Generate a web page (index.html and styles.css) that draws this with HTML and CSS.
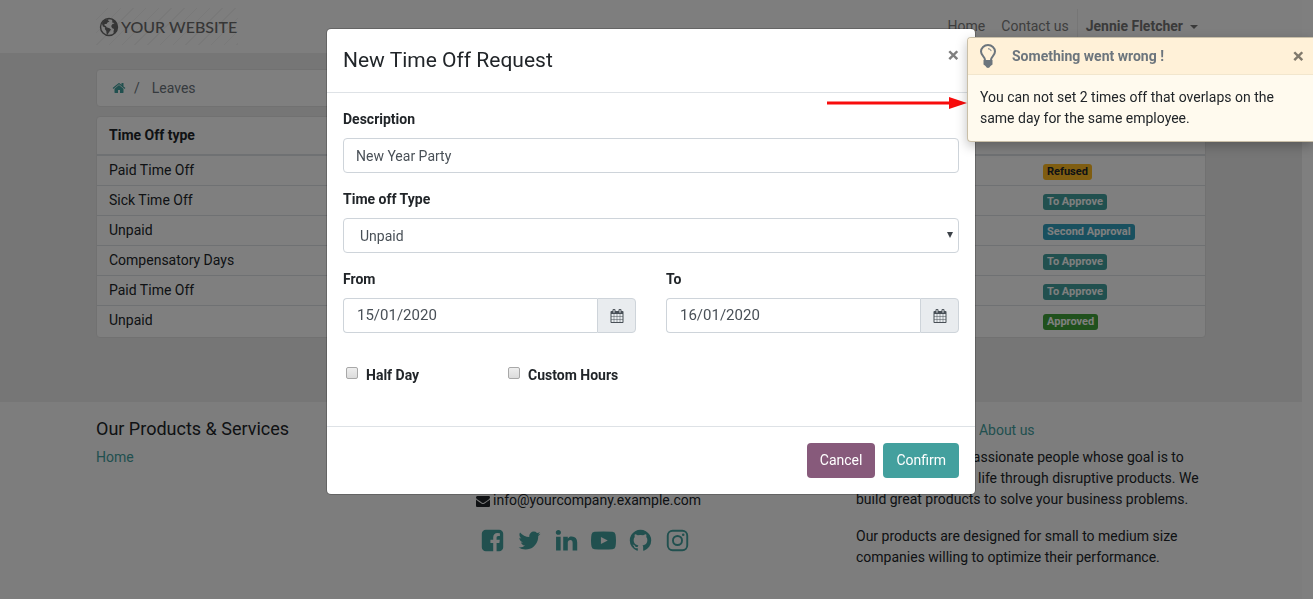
FILE: index.html
```html
<!DOCTYPE html>
<html lang="en">
<head>
<meta charset="utf-8">
<title>Leaves | Your Website</title>
<link rel="stylesheet" href="styles.css">
</head>
<body>
<div class="page">
  <header class="site-header">
    <div class="container header-row">
      <a class="logo" href="#">
        <svg class="globe" viewBox="0 0 20 20" aria-hidden="true">
          <circle cx="10" cy="10" r="8.500" fill="none" stroke="currentColor" stroke-width="1.400"/>
          <path fill="currentColor" d="M3.500 5 6 2.800 9.500 2 9 3.500 10.500 4.500 8.500 5.500 7.500 7 5.500 7 5.500 8.500 7 9 7.500 10.300 10.500 11.200 12 12.500 10.500 14.500 9.500 16 8.500 17.800 7.500 16.500 7.300 14 5.800 12 6.200 10.500 4 9.500 3 7Z"/>
          <path fill="currentColor" d="M12.500 2 15.500 3.500 18 7 18.500 11 17 15 14.800 17 14.500 14.500 15 12 13 11 12.200 9 13.500 7 15.500 6.500 14 5.500 12.800 5.500 13.500 4Z"/>
        </svg>
        <span>YOUR WEBSITE</span>
      </a>
      <nav class="nav">
        <a href="#">Home</a>
        <a href="#">Contact us</a>
        <button class="user" type="button">Jennie Fletcher <span class="caret"></span></button>
      </nav>
    </div>
  </header>

  <main class="main">
    <div class="container">
      <nav class="card breadcrumb" aria-label="Breadcrumb">
        <a href="#" aria-label="Home"><svg class="home-icon" viewBox="0 0 1792 1792" aria-hidden="true"><path fill="currentColor" d="M1472 992v480q0 26-19 45t-45 19h-384v-384h-256v384h-384q-26 0-45-19t-19-45v-480q0-1 .5-3t.5-3l575-474 575 474q1 2 1 6zm223-69l-62 74q-8 9-21 11h-3q-13 0-21-7l-692-577-692 577q-12 8-24 7-13-2-21-11l-62-74q-8-10-7-23.500t11-21.500l719-599q32-26 76-26t76 26l244 204v-195q0-14 9-23t23-9h192q14 0 23 9t9 23v408l219 182q10 8 11 21.500t-7 23.500z"/></svg></a>
        <span class="slash">/</span>
        <span>Leaves</span>
      </nav>
      <div class="card">
        <table class="leaves">
          <thead><tr><th>Time Off type</th><th class="status"></th></tr></thead>
          <tbody>
            <tr><td>Paid Time Off</td><td class="status"><span class="badge refused">Refused</span></td></tr>
            <tr><td>Sick Time Off</td><td class="status"><span class="badge pending">To Approve</span></td></tr>
            <tr><td>Unpaid</td><td class="status"><span class="badge second">Second Approval</span></td></tr>
            <tr><td>Compensatory Days</td><td class="status"><span class="badge pending">To Approve</span></td></tr>
            <tr><td>Paid Time Off</td><td class="status"><span class="badge pending">To Approve</span></td></tr>
            <tr><td>Unpaid</td><td class="status"><span class="badge approved">Approved</span></td></tr>
          </tbody>
        </table>
      </div>
    </div>
  </main>

  <footer class="site-footer">
    <div class="container footer-grid">
      <section>
        <h2>Our Products &amp; Services</h2>
        <a href="#">Home</a>
      </section>
      <section class="contact">
        <p class="mail"><svg viewBox="0 0 1792 1792" aria-hidden="true"><path fill="currentColor" d="M1792 710v794q0 66-47 113t-113 47h-1472q-66 0-113-47t-47-113v-794q44 49 101 87 362 246 497 345 57 42 92.500 65.500t94.500 48 110 24.500h2q51 0 110-24.500t94.500-48 92.500-65.500q170-123 498-345 57-39 100-87zm0-294q0 79-49 151t-122 123q-376 261-468 325-10 7-42.500 31t-54 38.500-52 32.500-57.500 27-50 9h-2q-23 0-50-9t-57.500-27-52-32.500-54-38.500-42.500-31q-91-64-262-182.500t-205-142.500q-62-42-117-115.500t-55-136.500q0-78 41.500-130t118.500-52h1472q65 0 112.500 47t47.500 113z"/></svg><span>info@yourcompany.example.com</span></p>
        <div class="social">
          <a href="#" aria-label="Facebook"><svg viewBox="0 0 1792 1792"><path fill="currentColor" d="M1376 128q119 0 203.500 84.500t84.500 203.500v960q0 119-84.500 203.500t-203.500 84.500h-188v-595h199l30-232h-229v-148q0-56 23.500-84t91.500-28l122-1v-207q-63-9-178-9-136 0-217.500 80t-81.500 226v171h-200v232h200v595h-532q-119 0-203.500-84.500t-84.500-203.500v-960q0-119 84.500-203.500t203.500-84.500h960z"/></svg></a>
          <a href="#" aria-label="Twitter"><svg viewBox="0 0 1792 1792"><path fill="currentColor" d="M1684 408q-67 98-162 167 1 14 1 42 0 130-38 259.500t-115.500 248.500-184.500 210.500-258 146-323 54.500q-271 0-496-145 35 4 78 4 225 0 401-138-105-2-188-64.500t-114-159.500q33 5 61 5 43 0 85-11-112-23-185.500-111.500t-73.500-205.500v-4q68 38 146 41-66-44-105-115t-39-154q0-88 44-163 121 149 294.500 238.500t371.500 99.500q-8-38-8-74 0-134 94.500-228.500t228.500-94.500q140 0 236 102 109-21 205-78-37 115-142 178 93-10 186-50z"/></svg></a>
          <a href="#" aria-label="LinkedIn"><svg viewBox="0 0 1792 1792"><path fill="currentColor" d="M477 625v991h-330v-991h330zm21-306q1 73-50.500 122t-135.500 49h-2q-82 0-132-49t-50-122q0-74 51.500-122.500t134.500-48.500 133 48.500 51 122.500zm1166 729v568h-329v-530q0-105-40.500-164.500t-126.500-59.500q-63 0-105.500 34.500t-63.500 85.500q-11 30-11 81v553h-329q2-399 2-647t-1-296l-1-48h329v144h-2q20-32 41-56t56.500-52 87-43.500 114.500-15.500q171 0 275 113.500t104 332.500z"/></svg></a>
          <a href="#" aria-label="YouTube"><svg viewBox="0 0 1792 1792"><path fill="currentColor" fill-rule="evenodd" d="M896 256q420 0 640 18 190 16 220 190 36 200 36 432t-36 432q-30 174-220 190-220 18-640 18t-640-18q-190-16-220-190-36-200-36-432t36-432q30-174 220-190 220-18 640-18zM711 640v512l490-256z"/></svg></a>
          <a href="#" aria-label="GitHub"><svg viewBox="0 0 1792 1792"><path fill="currentColor" d="M896 128q209 0 385.500 103t279.500 279.500 103 385.500q0 251-146.500 451.500t-378.500 277.500q-27 5-40-7t-13-30q0-3 .5-76.500t.5-134.500q0-97-52-142 57-6 102.500-18t94-39 81-66.500 53-105 20.500-150.500q0-119-79-206 37-91-8-204-28-9-81 11t-92 44l-38 24q-93-26-192-26t-192 26q-16-11-42.500-27t-83.500-38.500-85-13.500q-45 113-8 204-79 87-79 206 0 85 20.500 150t52.500 105 80.500 67 94 39 102.500 18q-39 36-49 103-21 10-45 15t-57 5-65.500-21.500-55.500-62.500q-19-32-48.500-52t-49.500-24l-20-3q-21 0-29 4.500t-5 11.500 9 14 13 12l7 5q22 10 43.500 38t31.500 51l10 23q13 38 44 61.500t67 30 69.500 7 55.500-3.500l23-4q0 38 .5 88.500t.5 54.500q0 18-13 30t-40 7q-232-77-378.500-277.500t-146.500-451.500q0-209 103-385.500t279.500-279.500 385.500-103z"/></svg></a>
          <a href="#" aria-label="Instagram"><svg viewBox="0 0 1792 1792"><rect x="197" y="197" width="1398" height="1398" rx="350" fill="none" stroke="currentColor" stroke-width="138"/><circle cx="896" cy="896" r="325" fill="none" stroke="currentColor" stroke-width="138"/><circle cx="1306" cy="486" r="92" fill="currentColor"/></svg></a>
        </div>
      </section>
      <section>
        <h2>Our Company - <a href="#">About us</a></h2>
        <p>We are a team of passionate people whose goal is to improve everyone's life through disruptive products. We build great products to solve your business problems.</p>
        <p>Our products are designed for small to medium size companies willing to optimize their performance.</p>
      </section>
    </div>
  </footer>
</div>

<div class="backdrop">
  <form class="modal" role="dialog" aria-labelledby="dialog-title">
    <div class="modal-header">
      <h1 id="dialog-title">New Time Off Request</h1>
      <button class="close" type="button" aria-label="Close">×</button>
    </div>
    <div class="modal-body">
      <div class="field">
        <label for="description">Description</label>
        <input class="control" id="description" type="text" value="New Year Party">
      </div>
      <div class="field">
        <label for="type">Time off Type</label>
        <div class="select-wrap">
          <select class="control" id="type"><option>Unpaid</option></select>
          <svg class="select-arrow" viewBox="0 0 6 6" aria-hidden="true"><path d="M0 0h6L3 6z" fill="currentColor"/></svg>
        </div>
      </div>
      <div class="dates">
        <div class="field">
          <label for="from">From</label>
          <div class="date-group">
            <input class="control date" id="from" type="text" value="15/01/2020">
            <button class="addon" type="button" aria-label="Pick start date"><svg viewBox="0 0 1792 1792"><use href="#calendar"/></svg></button>
          </div>
        </div>
        <div class="field">
          <label for="to">To</label>
          <div class="date-group">
            <input class="control date" id="to" type="text" value="16/01/2020">
            <button class="addon" type="button" aria-label="Pick end date"><svg viewBox="0 0 1792 1792"><path id="calendar" fill="currentColor" d="M192 1664h288v-288h-288v288zm352 0h320v-288h-320v288zm-352-352h288v-320h-288v320zm352 0h320v-320h-320v320zm-352-384h288v-288h-288v288zm736 736h320v-288h-320v288zm-384-736h320v-288h-320v288zm768 736h288v-288h-288v288zm-384-352h320v-320h-320v320zm-352-864v-288q0-13-9.500-22.500t-22.500-9.500h-64q-13 0-22.500 9.500t-9.500 22.500v288q0 13 9.500 22.500t22.500 9.500h64q13 0 22.500-9.500t9.500-22.500zm736 864h288v-320h-288v320zm-384-384h320v-288h-320v288zm384 0h288v-288h-288v288zm32-480v-288q0-13-9.500-22.500t-22.500-9.500h-64q-13 0-22.500 9.500t-9.500 22.500v288q0 13 9.500 22.500t22.500 9.500h64q13 0 22.500-9.500t9.500-22.500zm384-64v1280q0 52-38 90t-90 38h-1408q-52 0-90-38t-38-90v-1280q0-52 38-90t90-38h128v-96q0-66 47-113t113-47h64q66 0 113 47t47 113v96h384v-96q0-66 47-113t113-47h64q66 0 113 47t47 113v96h128q52 0 90 38t38 90z"/></svg></button>
          </div>
        </div>
      </div>
      <div class="checks">
        <div class="check"><input type="checkbox" id="half"><label for="half">Half Day</label></div>
        <div class="check"><input type="checkbox" id="custom"><label for="custom">Custom Hours</label></div>
      </div>
    </div>
    <div class="modal-footer">
      <button class="btn cancel" type="button">Cancel</button>
      <button class="btn confirm" type="submit">Confirm</button>
    </div>
  </form>
</div>

<svg class="pointer" viewBox="0 0 140 12" aria-hidden="true"><path d="M0 4.500h122V0l18 6-18 6V7.500H0z" fill="#f80c0c"/></svg>

<aside class="toast" role="alert">
  <div class="toast-header">
    <svg class="bulb" viewBox="0 0 16 24" aria-hidden="true">
      <path d="M5 16C5 12.500 1 11.500 1 7.500a7 6.500 0 0 1 14 0c0 4-4 5-4 8.500" fill="none" stroke="currentColor" stroke-width="2"/>
      <path d="M8 4.800c1.800 0 3 .8 3 2.300" fill="none" stroke="currentColor"/>
      <path d="M3.500 16h9v4.500l-2 1.500q-1 2-2.500 2t-2.500-2l-2-1.500z" fill="currentColor"/>
    </svg>
    <strong>Something went wrong !</strong>
    <button class="close" type="button" aria-label="Dismiss">×</button>
  </div>
  <p class="toast-body">You can not set 2 times off that overlaps on the same day for the same employee.</p>
</aside>
</body>
</html>
```
FILE: styles.css
```css
*, *::before, *::after { box-sizing: border-box; }

body {
  margin: 0;
  font: 14px/21px Roboto, "Liberation Sans", sans-serif;
  color: #212529;
  background: #fff;
}

h1, h2, p { margin: 0; font-weight: 400; }
a { color: #43a09e; text-decoration: none; }
button, input, select { font: inherit; color: inherit; margin: 0; }
button { cursor: pointer; }

.page {
  display: flex;
  flex-direction: column;
  min-height: 100vh;
  margin-right: 11px;
}

.container {
  width: 100%;
  max-width: 1140px;
  margin: 0 auto;
  padding: 0 15px;
}

/* Header */
.site-header { background: #fdfdfd; padding: 8px 0; }
.header-row { display: flex; align-items: center; justify-content: space-between; }

.logo {
  display: flex;
  align-items: center;
  gap: 2px;
  height: 37px;
  padding: 0 1px 0 3px;
  font: 500 16px/24px Lato, sans-serif;
  color: #6c6c6c;
  background: repeating-linear-gradient(135deg, #fdfdfd 0 8px, #f2f2f2 8px 9px);
}
.globe { width: 20px; height: 20px; }

.nav { display: flex; align-items: center; }
.nav a { padding: 0 8px; color: #7d7d7d; }
.user {
  display: flex;
  align-items: center;
  gap: 7px;
  height: 36px;
  padding: 0 8px;
  border: 0;
  border-left: 1px solid #ececec;
  background: none;
  font-weight: 700;
  color: #757575;
}
.caret { border: 4px solid transparent; border-top-color: currentColor; border-bottom: 0; }

/* Listing */
.main { background: #ededed; padding: 16px 0 64px; }
.card {
  background: #fff;
  border: 1px solid #e2e2e2;
  border-radius: 4px;
  overflow: hidden;
}
.breadcrumb {
  display: flex;
  align-items: center;
  gap: 8px;
  height: 38px;
  margin-bottom: 9px;
  padding: 0 15px;
  color: #6c757d;
}
.breadcrumb a { display: flex; }
.home-icon { width: 14px; height: 14px; }
.slash { margin-right: 4px; }

.leaves { width: 100%; border-collapse: separate; border-spacing: 0; table-layout: fixed; }
.leaves th { text-align: left; font-weight: 700; height: 39px; padding: 0 12px; border-bottom: 2px solid #dee2e6; }
.leaves td { height: 30px; padding: 4px 12px; border-bottom: 1px solid #dee2e6; }
.leaves tr:last-child td { height: 31px; padding-bottom: 6px; border-bottom: 0; }
.leaves th.status, .leaves td.status { width: 168px; padding-left: 6px; }
.badge {
  display: block;
  width: fit-content;
  margin-top: 3px;
  padding: 2px 4px 3px;
  border-radius: 3px;
  font-size: 11px;
  line-height: 11px;
  font-weight: 700;
  color: #fff;
}
.refused { background: #ffbb22; color: #212529; }
.pending { background: #43a09e; }
.second { background: #33a0bf; }
.approved { background: #40a33a; }

/* Footer */
.site-footer { flex: 1; background: #fbfbfb; padding: 16px 0 24px; }
.footer-grid { display: grid; grid-template-columns: repeat(3, 1fr); gap: 30px; }
.site-footer h2 { font-size: 18px; line-height: 22px; margin-bottom: 7px; }
.site-footer h2 a { font-size: 14px; line-height: 14px; }
.site-footer p { margin-bottom: 16px; }
.contact { padding-top: 72px; }
.mail { display: flex; align-items: center; gap: 3px; }
.mail svg { width: 14px; height: 14px; }
.social { display: flex; gap: 12px; padding: 1px 0 0 4px; }
.social a { display: flex; }
.social svg { width: 25px; height: 25px; }

/* Dialog */
.backdrop {
  position: fixed;
  inset: 0;
  display: flex;
  justify-content: center;
  align-items: flex-start;
  padding: 28px 11px 28px 0;
  background: rgba(0, 0, 0, .5);
}
.modal {
  width: 100%;
  max-width: 650px;
  background: #fff;
  background-clip: padding-box;
  border: 1px solid rgba(0, 0, 0, .2);
  border-radius: 5px;
}
.modal-header {
  display: flex;
  justify-content: space-between;
  align-items: flex-start;
  padding: 15px 16px 16px;
  border-bottom: 1px solid #dee2e6;
}
.modal-header h1 { font-size: 21px; line-height: 32px; }
.close {
  padding: 0;
  border: 0;
  background: none;
  font-size: 21px;
  line-height: 23px;
  font-weight: 700;
  color: #7f7f7f;
}
.modal-body { padding: 16px 16px 40px; }
.field { margin-bottom: 16px; }
.field label { display: block; margin-bottom: 8px; font-weight: 700; }
.control {
  display: block;
  width: 100%;
  height: 35px;
  padding: 0 12px;
  border: 1px solid #ced4da;
  border-radius: 4px;
  background: #fff;
  color: #495057;
}
select.control { appearance: none; padding: 2px 16px 0; }
.select-wrap { position: relative; }
.select-arrow {
  position: absolute;
  right: 6px;
  top: 14px;
  width: 6px;
  height: 6px;
  color: #3c4248;
  pointer-events: none;
}
.dates { display: grid; grid-template-columns: 1fr 1fr; gap: 30px; }
.date-group { display: flex; }
.control.date {
  flex: 1;
  min-width: 0;
  padding: 0 13px 2px;
  border-radius: 4px 0 0 4px;
  border-right: 0;
  font-size: 15px;
}
.addon {
  display: flex;
  align-items: center;
  justify-content: center;
  width: 39px;
  padding: 0;
  border: 1px solid #ced4da;
  border-radius: 0 4px 4px 0;
  background: #e9ecef;
  color: #495057;
}
.addon svg { width: 14px; height: 14px; }

.checks { display: grid; grid-template-columns: repeat(4, 1fr); margin: 16px -16px 0; }
.check { display: flex; gap: 8px; padding-left: 19px; white-space: nowrap; font-weight: 700; }
.check input {
  appearance: none;
  width: 12px;
  height: 12px;
  margin-top: 2px;
  border: 1px solid #a8a8a8;
  border-radius: 2px;
  background: linear-gradient(#eee, #dcdcdc);
}

.modal-footer {
  display: flex;
  justify-content: flex-end;
  gap: 8px;
  padding: 16px;
  border-top: 1px solid #dee2e6;
}
.btn { height: 35px; padding: 0 13px; border: 0; border-radius: 4px; color: #fff; }
.cancel { background: #875a7b; }
.confirm { background: #43a09e; }

/* Notification */
.pointer { position: fixed; top: 97px; right: 346px; width: 140px; height: 12px; }
.toast {
  position: fixed;
  top: 37px;
  right: 0;
  width: 346px;
  border: 1px solid #c9bfa8;
  border-right: 0;
  border-radius: 4px 0 0 4px;
  background: #fffaee;
  box-shadow: 0 4px 12px rgba(0, 0, 0, .25);
  overflow: hidden;
}
.toast-header {
  display: flex;
  align-items: center;
  height: 37px;
  padding: 0 9px 0 12px;
  border-bottom: 1px solid #f2e6cd;
  background: #fff1d8;
  color: #6c757d;
}
.bulb { width: 16px; height: 24px; margin-right: 16px; }
.toast-header strong { flex: 1; }
.toast-header .close { color: #80796c; }
.toast-body { padding: 12px; }
```
